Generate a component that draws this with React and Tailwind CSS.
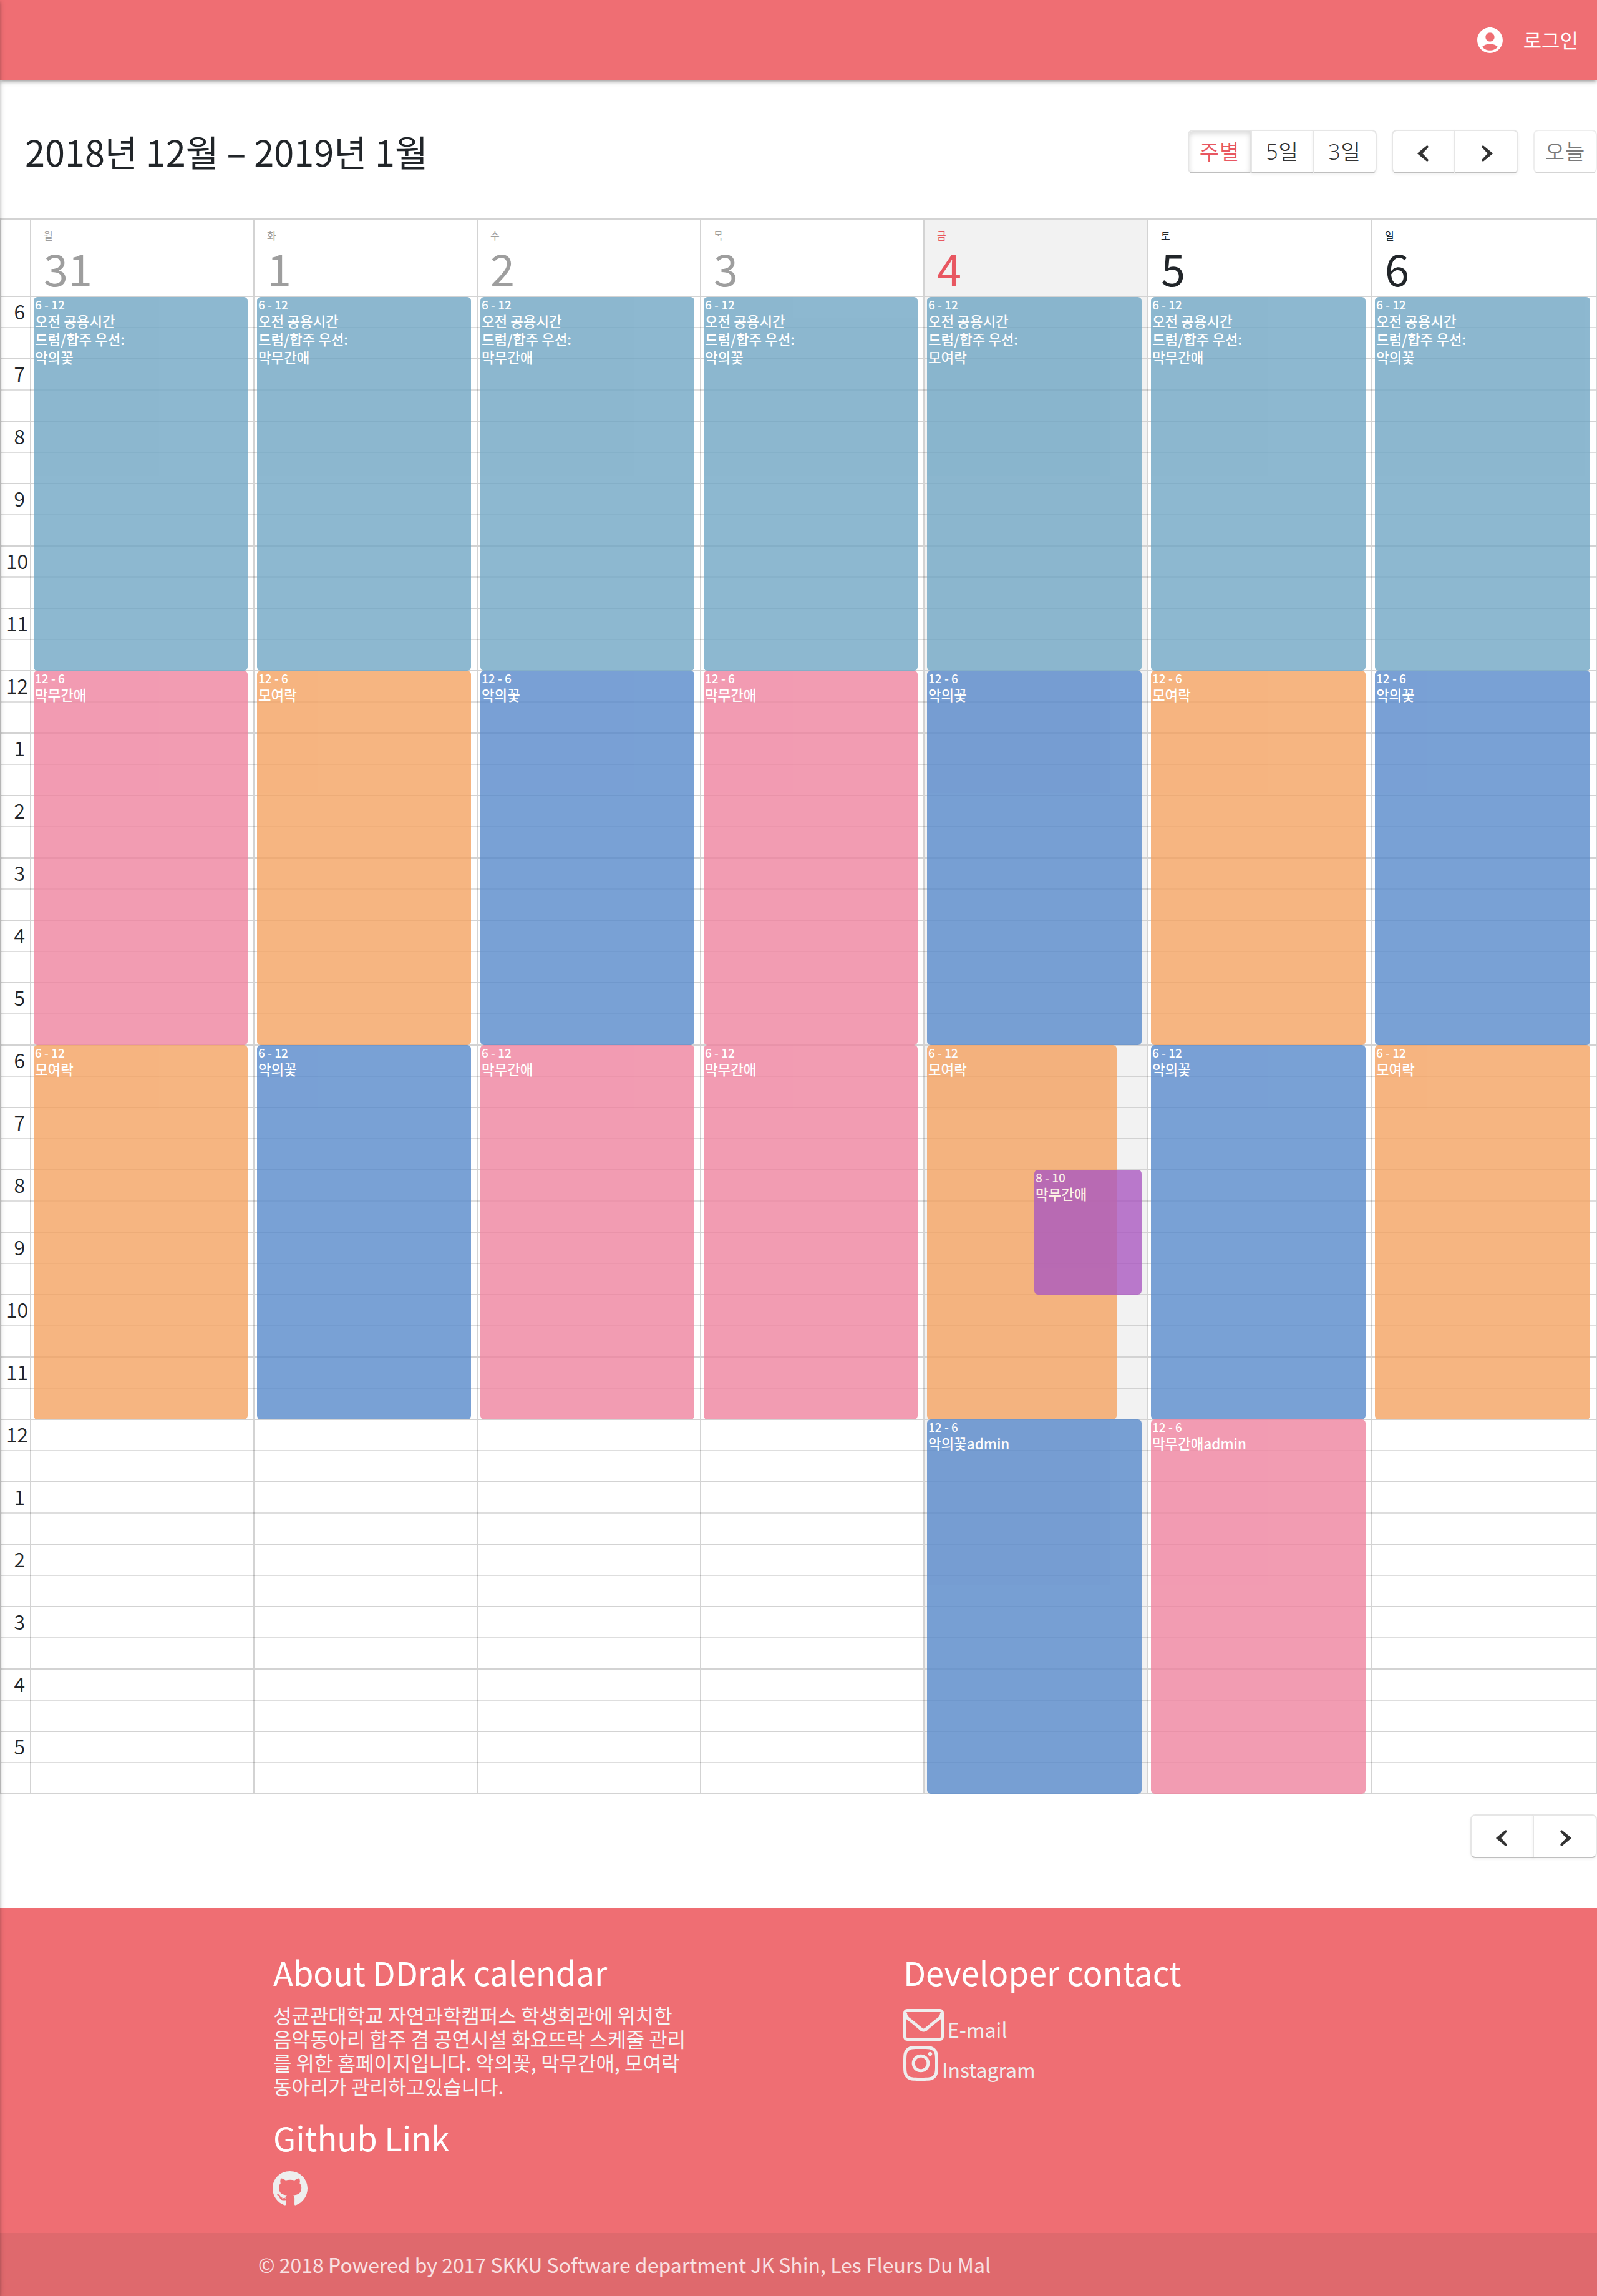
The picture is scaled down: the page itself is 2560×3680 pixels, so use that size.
import React from "react";
import { FaGithub, FaInstagram } from "react-icons/fa";
import { MdAccountCircle } from "react-icons/md";

const TEAL = "bg-[#70a6c4]";
const PINK = "bg-[#ef839f]";
const ORANGE = "bg-[#f4a261]";
const BLUE = "bg-[#5889cb]";
const PURPLE = "bg-[#aa59c0]";

const morning = (team) => ({
  from: 0,
  to: 12,
  time: "6 - 12",
  color: TEAL,
  lines: ["오전 공용시간", "드럼/합주 우선:", team],
});
const slot = (block, color, name, extra) => ({
  from: block * 12,
  to: block * 12 + 12,
  time: block % 2 ? "12 - 6" : "6 - 12",
  color,
  lines: [name],
  ...extra,
});

const DAYS = [
  {
    name: "월", date: "31", tone: "text-[#9e9e9e]",
    events: [morning("악의꽃"), slot(1, PINK, "막무간애"), slot(2, ORANGE, "모여락")],
  },
  {
    name: "화", date: "1", tone: "text-[#9e9e9e]",
    events: [morning("막무간애"), slot(1, ORANGE, "모여락"), slot(2, BLUE, "악의꽃")],
  },
  {
    name: "수", date: "2", tone: "text-[#9e9e9e]",
    events: [morning("막무간애"), slot(1, BLUE, "악의꽃"), slot(2, PINK, "막무간애")],
  },
  {
    name: "목", date: "3", tone: "text-[#9e9e9e]",
    events: [morning("악의꽃"), slot(1, PINK, "막무간애"), slot(2, PINK, "막무간애")],
  },
  {
    name: "금", date: "4", tone: "text-[#e85761]", today: true,
    events: [
      morning("모여락"),
      slot(1, BLUE, "악의꽃"),
      slot(2, ORANGE, "모여락", { right: 49 }),
      { from: 28, to: 32, time: "8 - 10", color: PURPLE, lines: ["막무간애"], left: 176 },
      slot(3, BLUE, "악의꽃admin"),
    ],
  },
  {
    name: "토", date: "5", tone: "text-[#212529]",
    events: [morning("막무간애"), slot(1, ORANGE, "모여락"), slot(2, BLUE, "악의꽃"), slot(3, PINK, "막무간애admin")],
  },
  {
    name: "일", date: "6", tone: "text-[#212529]",
    events: [morning("악의꽃"), slot(1, BLUE, "악의꽃"), slot(2, ORANGE, "모여락")],
  },
];

const HOURS = [6, 7, 8, 9, 10, 11, 12, 1, 2, 3, 4, 5, 6, 7, 8, 9, 10, 11, 12, 1, 2, 3, 4, 5];

const COLS = "grid grid-cols-[46px_358px_358px_358px_358px_359px_359px_360px]";

function Event({ event }) {
  const top = event.from === 0 ? 0 : event.from * 50 - 1;
  const bottom = event.to * 50 - 1;
  return (
    <div
      className={`absolute rounded-[6px] px-[2px] text-white opacity-80 ${event.color}`}
      style={{ top, height: bottom - top, left: event.left ?? 4, right: event.right ?? 9 }}
    >
      <div className="h-[24px] text-[19px] leading-[24px] font-medium whitespace-nowrap">{event.time}</div>
      {event.lines.map((line, i) => (
        <div key={i} className="h-[29px] text-[22.4px] leading-[29px] font-medium whitespace-nowrap">{line}</div>
      ))}
    </div>
  );
}

function Chevron({ right }) {
  return (
    <svg
      width="18"
      height="26"
      viewBox="0 0 18 26"
      className={right ? "mt-[6px] ml-[2px] -scale-x-100" : "mt-[6px] mr-[2px]"}
    >
      <path
        d="M0.6 12.2 L14.6 0.7 Q16 -0.3 17.1 1 Q18.2 2.4 17.2 3.6 L8.4 13 L17.2 22.4 Q18.2 23.6 17.1 25 Q16 26.3 14.6 25.3 L0.6 13.8 Q-0.2 13 0.6 12.2 Z"
        fill="#333"
      />
    </svg>
  );
}

function Envelope() {
  return (
    <svg width="65" height="51" viewBox="0 0 65 51" fill="none" stroke="currentColor" strokeWidth="5" className="shrink-0">
      <rect x="2.5" y="2.5" width="60" height="46" rx="3.5" />
      <path d="M3.5 6 C3.5 10 5.5 14 9 16.6 C15 21 21 26 26.5 30.5 Q32.5 37.5 38.5 30.5 C44 26 50 21 56 16.6 C59.5 14 61.5 10 61.5 6" />
    </svg>
  );
}

const BTN =
  "flex h-[70px] items-center justify-center border-2 border-[#e6e6e6] border-b-[#bfbfbf] bg-white font-['Open_Sans','Noto_Sans_CJK_KR',sans-serif] text-[34px] font-[350] tracking-[1px]";
const RAISED = "text-[#333] shadow-[0_2px_4px_rgba(0,0,0,0.05)]";

function NavButtons() {
  return (
    <div className="flex">
      <button className={`${BTN} ${RAISED} w-[102px] rounded-l-[8px]`}><Chevron /></button>
      <button className={`${BTN} ${RAISED} -ml-[2px] w-[103px] rounded-r-[8px]`}><Chevron right /></button>
    </div>
  );
}

export default function App() {
  return (
    <div className="relative flex h-[3680px] w-[2560px] flex-col overflow-hidden bg-white font-['Noto_Sans_CJK_KR',sans-serif] text-[#212529]">
      <header className="z-10 flex h-[128px] shrink-0 items-center justify-end bg-[#ef6e73] pr-[30px] text-white shadow-[0_4px_4px_0_rgba(0,0,0,0.14),0_6px_2px_-4px_rgba(0,0,0,0.12),0_2px_10px_0_rgba(0,0,0,0.2)]">
        <MdAccountCircle className="size-[49px]" />
        <span className="mb-[3px] ml-[29px] text-[32px] leading-none">로그인</span>
      </header>

      <div className="flex h-[222px] shrink-0 items-center pt-[6px] pl-[40px]">
        <h2 className="mt-[2px] text-[57.6px] leading-none">2018년 12월 – 2019년 1월</h2>
        <div className="mt-[2px] ml-auto flex gap-[24px]">
          <div className="flex">
            <button className={`${BTN} w-[102px] rounded-l-[8px] text-[#e85761] shadow-[inset_0_4px_8px_rgba(0,0,0,0.15)]`}>주별</button>
            <button className={`${BTN} ${RAISED} -ml-[1px] w-[101px]`}>5일</button>
            <button className={`${BTN} ${RAISED} -ml-[2px] w-[103px] rounded-r-[8px]`}>3일</button>
          </div>
          <NavButtons />
          <button className={`${BTN} w-[102px] rounded-[8px] text-[#333] opacity-65`}>오늘</button>
        </div>
      </div>

      <section className="h-[2526px] w-[2560px] shrink-0 border-2 border-[#d3d3d3]">
        <div className={`${COLS} h-[124px] border-b-2 border-[#d3d3d3]`}>
          <div />
          {DAYS.map((d) => (
            <div key={d.date} className={`border-l-2 border-[#d3d3d3] pt-[15px] pl-[20px] ${d.tone} ${d.today ? "bg-[#f2f2f2]" : ""}`}>
              <div className="h-[20px] text-[16px] leading-[20px]">{d.name}</div>
              <div className="mt-[5px] text-[70.4px] leading-[72px]">{d.date}</div>
            </div>
          ))}
        </div>
        <div className={`${COLS} relative h-[2398px]`}>
          <div>
            {HOURS.map((h, i) => (
              <div key={i} className="h-[100px] px-[8px] text-right text-[32px] leading-[49px] font-[350] first:h-[98px] first:leading-[45px]">{h}</div>
            ))}
          </div>
          {DAYS.map((d) => (
            <div key={d.date} className={`relative border-l-2 border-[#d3d3d3] ${d.today ? "bg-[#f2f2f2]" : ""}`} />
          ))}
          <div className="absolute inset-0 flex flex-col overflow-hidden">
            {HOURS.map((h, i) => (
              <div key={i} className={i ? "h-[100px] shrink-0 border-t-2 border-[#d3d3d3]" : "h-[98px] shrink-0"}>
                <div className="h-[50px] border-b-2 border-black/13" />
              </div>
            ))}
          </div>
          <div className={`${COLS} absolute inset-0`}>
            <div />
            {DAYS.map((d) => (
              <div key={d.date} className="relative ml-[2px]">
                {d.events.map((e, i) => <Event key={i} event={e} />)}
              </div>
            ))}
          </div>
        </div>
      </section>

      <div className="flex h-[182px] shrink-0 items-start justify-end pt-[32px]">
        <NavButtons />
      </div>

      <footer className="flex grow flex-col bg-[#ef6e73] text-white">
        <div className="grid h-[521px] grid-cols-[1010px_1fr] pl-[438px]">
          <div>
            <h5 className="mt-[69px] text-[52.5px] leading-[66px]">About DDrak calendar</h5>
            <p className="mt-[17px] text-[32px] leading-[38px] text-[#f5f5f5]">
              성균관대학교 자연과학캠퍼스 학생회관에 위치한<br />
              음악동아리 합주 겸 공연시설 화요뜨락 스케줄 관리<br />
              를 위한 홈페이지입니다. 악의꽃, 막무간애, 모여락<br />
              동아리가 관리하고있습니다.
            </p>
            <h5 className="mt-[30px] text-[52.5px] leading-[66px]">Github Link</h5>
            <FaGithub className="mt-[21px] -ml-px h-[58px] w-[56px] text-[#eee]" />
          </div>
          <div className="text-[32px] text-[#eee]">
            <h5 className="mt-[69px] text-[52.5px] leading-[66px] text-white">Developer contact</h5>
            <div className="mt-[27px] flex h-[55px] items-start">
              <Envelope />
              <span className="mt-[8px] ml-[6px] leading-[48px]">E-mail</span>
            </div>
            <div className="flex h-[64px] items-start">
              <FaInstagram className="h-[64px] w-[56px]" />
              <span className="mt-[17px] ml-[6px] leading-[48px]">Instagram</span>
            </div>
          </div>
        </div>
        <div className="flex grow items-center bg-[#df696d] pb-[2px] pl-[414px] text-[32px] text-white/80">
          © 2018 Powered by 2017 SKKU Software department JK Shin, Les Fleurs Du Mal
        </div>
      </footer>

      <div className="absolute inset-y-0 -left-[10px] z-20 w-[10px] shadow-[0_4px_4px_0_rgba(0,0,0,0.14),0_6px_2px_-4px_rgba(0,0,0,0.12),0_2px_10px_0_rgba(0,0,0,0.2)]" />
    </div>
  );
}
